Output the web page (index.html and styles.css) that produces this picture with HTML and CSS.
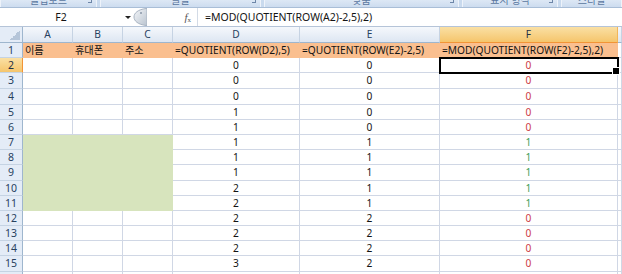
FILE: index.html
```html
<!DOCTYPE html>
<html lang="ko">
<head>
<meta charset="utf-8">
<title>Sheet</title>
<link rel="stylesheet" href="styles.css">
</head>
<body>
<div class="ribbon">
  <div class="grp g1"><span>클립보드</span><i class="launch"></i></div>
  <div class="grp g2"><span>글꼴</span><i class="launch"></i></div>
  <div class="grp g3"><span>맞춤</span><i class="launch"></i></div>
  <div class="grp g4"><span>표시 형식</span><i class="launch"></i></div>
  <div class="grp g5"><span>스타일</span></div>
</div>
<div class="fbar">
  <div class="namebox"><span class="nb-text">F2</span><span class="nb-arrow"></span></div>
  <svg class="split" width="14" height="18" viewBox="0 0 14 18">
    <defs>
      <linearGradient id="sg" x1="0" y1="0" x2="1" y2="1">
        <stop offset="0" stop-color="#f4f6f9"/>
        <stop offset="1" stop-color="#b9c3cf"/>
      </linearGradient>
    </defs>
    <path d="M13 0.5 C5 1.5 1 5 1 9 C1 13 5 16.5 13 17.5 L14 17.5 L14 0.5 Z" fill="url(#sg)" stroke="#a9b4c2" stroke-width="1"/>
    <circle cx="8" cy="5" r="1" fill="#8a97a8"/>
  </svg>
  <div class="fx"><i>f</i><sub>x</sub></div>
  <div class="finput">=MOD(QUOTIENT(ROW(A2)-2,5),2)</div>
</div>
<div class="sheet">
  <div class="row hdr">
    <div class="corner"></div>
    <div class="ch">A</div><div class="ch">B</div><div class="ch">C</div>
    <div class="ch">D</div><div class="ch">E</div><div class="ch on">F</div><div class="ch"></div>
  </div>
  <div class="row">
    <div class="rh">1</div>
    <div class="c o l">이름</div><div class="c o l">휴대폰</div><div class="c o l">주소</div>
    <div class="c o l">=QUOTIENT(ROW(D2),5)</div>
    <div class="c o l">=QUOTIENT(ROW(E2)-2,5)</div>
    <div class="c o l">=MOD(QUOTIENT(ROW(F2)-2,5),2)</div>
    <div class="c"></div>
  </div>
  <div class="row">
    <div class="rh on">2</div><div class="c"></div><div class="c"></div><div class="c"></div>
    <div class="c">0</div><div class="c">0</div><div class="c red sel">0</div><div class="c"></div>
  </div>
  <div class="row t">
    <div class="rh">3</div><div class="c"></div><div class="c"></div><div class="c"></div>
    <div class="c">0</div><div class="c">0</div><div class="c red">0</div><div class="c"></div>
  </div>
  <div class="row t">
    <div class="rh">4</div><div class="c"></div><div class="c"></div><div class="c"></div>
    <div class="c">0</div><div class="c">0</div><div class="c red">0</div><div class="c"></div>
  </div>
  <div class="row">
    <div class="rh">5</div><div class="c"></div><div class="c"></div><div class="c"></div>
    <div class="c">1</div><div class="c">0</div><div class="c red">0</div><div class="c"></div>
  </div>
  <div class="row">
    <div class="rh">6</div><div class="c"></div><div class="c"></div><div class="c"></div>
    <div class="c">1</div><div class="c">0</div><div class="c red">0</div><div class="c"></div>
  </div>
  <div class="row">
    <div class="rh">7</div><div class="c g"></div><div class="c g"></div><div class="c g"></div>
    <div class="c">1</div><div class="c">1</div><div class="c grn">1</div><div class="c"></div>
  </div>
  <div class="row">
    <div class="rh">8</div><div class="c g"></div><div class="c g"></div><div class="c g"></div>
    <div class="c">1</div><div class="c">1</div><div class="c grn">1</div><div class="c"></div>
  </div>
  <div class="row t">
    <div class="rh">9</div><div class="c g"></div><div class="c g"></div><div class="c g"></div>
    <div class="c">1</div><div class="c">1</div><div class="c grn">1</div><div class="c"></div>
  </div>
  <div class="row">
    <div class="rh">10</div><div class="c g"></div><div class="c g"></div><div class="c g"></div>
    <div class="c">2</div><div class="c">1</div><div class="c grn">1</div><div class="c"></div>
  </div>
  <div class="row">
    <div class="rh">11</div><div class="c g"></div><div class="c g"></div><div class="c g"></div>
    <div class="c">2</div><div class="c">1</div><div class="c grn">1</div><div class="c"></div>
  </div>
  <div class="row">
    <div class="rh">12</div><div class="c"></div><div class="c"></div><div class="c"></div>
    <div class="c">2</div><div class="c">2</div><div class="c red">0</div><div class="c"></div>
  </div>
  <div class="row">
    <div class="rh">13</div><div class="c"></div><div class="c"></div><div class="c"></div>
    <div class="c">2</div><div class="c">2</div><div class="c red">0</div><div class="c"></div>
  </div>
  <div class="row">
    <div class="rh">14</div><div class="c"></div><div class="c"></div><div class="c"></div>
    <div class="c">2</div><div class="c">2</div><div class="c red">0</div><div class="c"></div>
  </div>
  <div class="row t">
    <div class="rh">15</div><div class="c"></div><div class="c"></div><div class="c"></div>
    <div class="c">3</div><div class="c">2</div><div class="c red">0</div><div class="c"></div>
  </div>
  <div class="row">
    <div class="rh">16</div><div class="c"></div><div class="c"></div><div class="c"></div>
    <div class="c"></div><div class="c"></div><div class="c"></div><div class="c"></div>
  </div>
</div>
</body>
</html>
```

FILE: styles.css
```css
* { box-sizing: border-box; margin: 0; padding: 0; }

body {
  margin: 0;
  width: 622px;
  height: 274px;
  overflow: hidden;
  background: #fff;
  font-family: "Noto Sans", "Noto Sans CJK KR", sans-serif;
  font-size: 10.5px;
  color: #141414;
}

/* ribbon strip (group labels, cut off) */
.ribbon {
  height: 8px;
  display: flex;
  gap: 3px;
  background: #c9daee;
  border-bottom: 1px solid #a9bed7;
  overflow: hidden;
}
.grp {
  position: relative;
  height: 7px;
  display: flex;
  justify-content: center;
  align-items: flex-end;
  background: linear-gradient(#dde8f5, #cddcef);
  border-left: 1px solid #eef3fa;
  border-right: 1px solid #eef3fa;
  color: #5a77a0;
  font-size: 10px;
  overflow: hidden;
}
.grp span { line-height: 10px; margin-bottom: 2px; }
.g1 { width: 97px; }
.g2 { width: 161px; }
.g3 { width: 195px; }
.g4 { width: 96px; }
.g5 { flex: 1; }
.launch {
  position: absolute;
  right: 4px;
  top: 0;
  width: 4px;
  height: 3px;
  border-right: 1px solid #6d86a8;
  border-bottom: 1px solid #6d86a8;
}

/* formula bar */
.fbar {
  height: 19px;
  display: flex;
  align-items: center;
  background: #fff;
  border-bottom: 1px solid #b5c4d8;
}
.namebox {
  width: 133px;
  height: 100%;
  display: flex;
  align-items: center;
}
.nb-text { width: 122px; text-align: center; }
.nb-arrow {
  width: 0;
  height: 0;
  margin-left: 3px;
  border-left: 3px solid transparent;
  border-right: 3px solid transparent;
  border-top: 3px solid #222;
}
.split { display: block; flex: none; }
.fx {
  width: 50px;
  height: 100%;
  text-align: right;
  padding-right: 6px;
  font-family: "Liberation Serif", serif;
  font-size: 11px;
  line-height: 18px;
  color: #555;
}
.fx sub { font-size: 7px; vertical-align: -1px; }
.finput {
  flex: 1;
  height: 100%;
  border-left: 1px solid #d3dbe6;
  padding-left: 7px;
  line-height: 18px;
  white-space: nowrap;
}

/* sheet */
.sheet { font-size: 10.2px; }
.row {
  display: grid;
  grid-template-columns: 23px 50px 50px 50px 127px 140px 178px 1fr;
  height: 15px;
  line-height: 14px;
}
.row.t { height: 16px; line-height: 15px; }
.row.hdr { height: 16px; line-height: 15px; }

.corner {
  position: relative;
  background: #e4ecf7;
  border-right: 1px solid #9eb6ce;
  border-bottom: 1px solid #9eb6ce;
}
.corner::after {
  content: "";
  position: absolute;
  right: 2px;
  bottom: 2px;
  width: 10px;
  height: 10px;
  background: linear-gradient(to bottom right, transparent 50%, #b5c5d9 50%);
}
.ch {
  background: linear-gradient(#f5f8fc, #dde6f2);
  border-right: 1px solid #c6d3e3;
  border-bottom: 1px solid #9eb6ce;
  color: #27415f;
  text-align: center;
}
.ch.on {
  background: linear-gradient(#fae0a4, #f5c56c);
  border-right-color: #f2b65a;
  border-bottom-color: #f29436;
  color: #1f2f44;
}
.rh {
  background: #e4ecf7;
  border-right: 1px solid #9eb6ce;
  border-bottom: 1px solid #c5d3e3;
  color: #27415f;
  text-align: center;
  font-size: 10.5px;
}
.rh.on {
  background: linear-gradient(#fae0a4, #f5c56c);
  border-right-color: #f29436;
  color: #1f2f44;
}
.c {
  border-right: 1px solid #d0d7e5;
  border-bottom: 1px solid #d0d7e5;
  text-align: center;
  white-space: nowrap;
  color: #141414;
}
.c.l { text-align: left; padding-left: 2px; }
.c.o { background: #fabf8f; border-color: #fabf8f; }
.c.g { background: #d7e4bd; border-color: #d7e4bd; }
.c.red { color: #cc3a44; }
.c.grn { color: #3b9c57; }
.c.sel {
  position: relative;
  outline: 2px solid #000;
  outline-offset: -1px;
  z-index: 1;
}
.c.sel::after {
  content: "";
  position: absolute;
  right: -3px;
  bottom: -3px;
  width: 6px;
  height: 6px;
  background: #000;
  border: 1px solid #fff;
}
```
